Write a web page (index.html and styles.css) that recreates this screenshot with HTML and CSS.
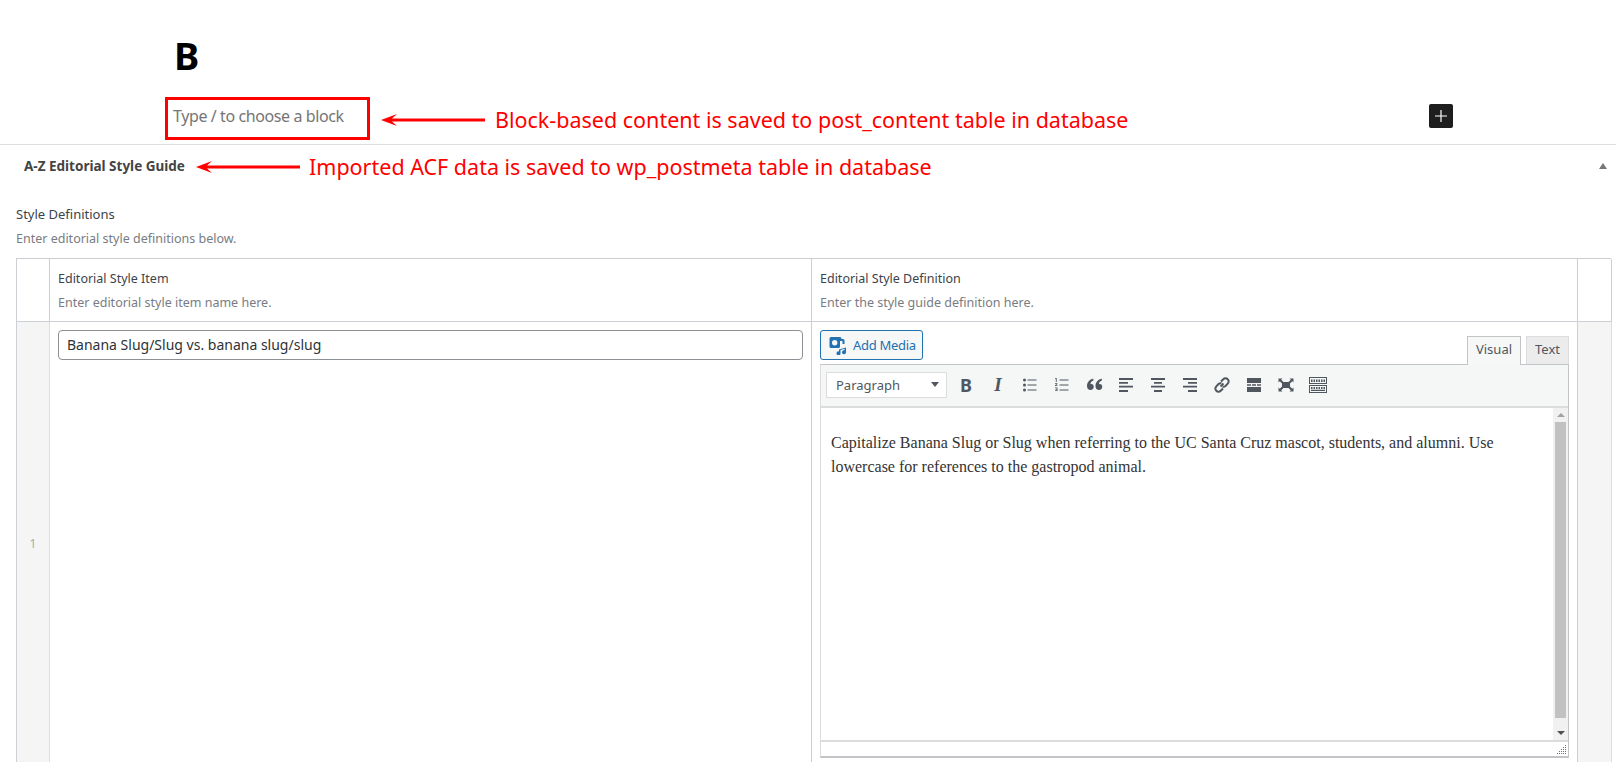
FILE: index.html
```html
<!DOCTYPE html>
<html lang="en">
<head>
<meta charset="utf-8">
<title>Editor</title>
<link rel="stylesheet" href="styles.css">
</head>
<body>
<div class="page">
  <section class="block-area">
    <h1 class="post-title">B</h1>
    <div class="block-row">
      <p class="placeholder">Type / to choose a block</p>
      <button class="inserter" aria-label="Add block">
        <svg width="24" height="24" viewBox="0 0 24 24"><path d="M11.400 6h1.200v5.400H18v1.200h-5.400V18h-1.200v-5.400H6v-1.200h5.400z" fill="#fff"/></svg>
      </button>
    </div>
  </section>

  <section class="metabox">
    <header class="metabox-head">
      <h2 class="metabox-title">A-Z Editorial Style Guide</h2>
      <span class="toggle"></span>
    </header>
    <div class="field">
      <div class="field-label top-label">Style Definitions</div>
      <p class="field-desc">Enter editorial style definitions below.</p>
      <div class="repeater">
        <div class="cell corner"></div>
        <div class="cell head">
          <div class="field-label">Editorial Style Item</div>
          <p class="field-desc">Enter editorial style item name here.</p>
        </div>
        <div class="cell head">
          <div class="field-label">Editorial Style Definition</div>
          <p class="field-desc">Enter the style guide definition here.</p>
        </div>
        <div class="cell corner"></div>

        <div class="cell order">1</div>
        <div class="cell body">
          <input class="text-input" type="text" value="Banana Slug/Slug vs. banana slug/slug">
        </div>
        <div class="cell body">
          <div class="editor-tools">
            <button class="add-media">
              <svg width="20" height="20" viewBox="0 0 20 20"><path fill="#2271b1" fill-rule="evenodd" d="M3 2h9.500l1.200 2H15a1.500 1.500 0 0 1 1.500 1.500V9h-2V6H12v5.500A1.500 1.500 0 0 1 10.500 13H3a1.500 1.500 0 0 1-1.500-1.500v-8A1.500 1.500 0 0 1 3 2zM6.700 5a2.700 2.700 0 1 0 0 5.400 2.700 2.700 0 0 0 0-5.400z"/><path fill="#2271b1" d="M11 14.500l7-2v4.700a2 2 0 1 1-1.500-1.900v-1.500l-4 1.100v3.400a2 2 0 1 1-1.500-1.900z"/></svg>
              <span>Add Media</span>
            </button>
            <div class="tabs">
              <span class="tab active">Visual</span>
              <span class="tab">Text</span>
            </div>
          </div>
          <div class="editor">
            <div class="toolbar">
              <div class="format-select"><span>Paragraph</span><i class="caret"></i></div>
              <span class="tool glyph-b">B</span>
              <span class="tool glyph-i">I</span>
              <span class="tool"><svg width="20" height="20" viewBox="0 0 20 20" fill="#50575e"><circle cx="4.500" cy="5" r="1.500"/><circle cx="4.500" cy="10" r="1.500"/><circle cx="4.500" cy="15" r="1.500"/><path d="M7.500 4.500h9v1h-9zM7.500 9.500h9v1h-9zM7.500 14.500h9v1h-9z"/></svg></span>
              <span class="tool"><svg width="20" height="20" viewBox="0 0 20 20" fill="#50575e"><path d="M3.500 3h1.200v4H3.800V4H3zM3 8.200h2.500V9l-1.500 1.200h1.500V11H3v-.8l1.500-1.200H3zM3 12.500h2.500v3.500H3v-.8h1.600v-.6H3.500v-.7h1.100v-.6H3zM7.500 4.500h9v1h-9zM7.500 9.500h9v1h-9zM7.500 14.500h9v1h-9z"/></svg></span>
              <span class="tool"><svg width="20" height="20" viewBox="2 2 16 16" fill="#50575e"><path d="M9.500 5v1.300C7.800 7 7.200 8 7.200 9.300c.2-.1.500-.1.700-.1 1.100 0 1.900.9 1.900 2.200 0 1.500-1 2.600-2.500 2.600-1.800 0-2.900-1.400-2.900-3.300C4.400 7.800 6.400 5.500 9.500 5zM16.300 5v1.300C14.600 7 14 8 14 9.300c.2-.1.500-.1.700-.1 1.100 0 1.900.9 1.900 2.200 0 1.500-1 2.600-2.500 2.600-1.800 0-2.900-1.400-2.900-3.300 0-2.900 2-5.200 5.100-5.700z"/></svg></span>
              <span class="tool"><svg width="20" height="20" viewBox="0 0 20 20" fill="#50575e"><path d="M3 3h14v2H3zM3 7h9v1.800H3zM3 10.800h14v1.800H3zM3 15h9v2H3z"/></svg></span>
              <span class="tool"><svg width="20" height="20" viewBox="0 0 20 20" fill="#50575e"><path d="M3 3h14v2H3zM6 7h8v1.800H6zM3 10.800h14v1.800H3zM6 15h8v2H6z"/></svg></span>
              <span class="tool"><svg width="20" height="20" viewBox="0 0 20 20" fill="#50575e"><path d="M3 3h14v2H3zM8 7h9v1.800H8zM3 10.800h14v1.800H3zM8 15h9v2H8z"/></svg></span>
              <span class="tool"><svg width="20" height="20" viewBox="0 0 20 20" fill="none" stroke="#50575e" stroke-width="2"><path d="M8.500 11.500l3-3"/><path d="M9 6.500l2.300-2.300a3 3 0 0 1 4.400 0 3 3 0 0 1 0 4.400L13.500 11a3 3 0 0 1-3 .7"/><path d="M11 13.500l-2.300 2.300a3 3 0 0 1-4.400 0 3 3 0 0 1 0-4.400L6.500 9a3 3 0 0 1 3-.7"/></svg></span>
              <span class="tool"><svg width="20" height="20" viewBox="0 0 20 20" fill="#50575e"><path d="M3 3h14v5H3zM3 9.300h4v1.400H3zM8 9.300h4v1.400H8zM13 9.300h4v1.400h-4zM3 12h14v5H3z"/></svg></span>
              <span class="tool"><svg width="20" height="20" viewBox="0 0 20 20" fill="#50575e"><path d="M2.500 3.500h4l-1.300 1.300L7.500 7h5l2.300-2.200-1.300-1.300h4v4l-1.300-1.300L14 8.500v3l2.200 2.300 1.300-1.300v4h-4l1.300-1.300L12.500 13h-5l-2.300 2.200 1.300 1.300h-4v-4l1.300 1.300L6 11.500v-3L3.800 6.200 2.500 7.500z"/></svg></span>
              <span class="tool"><svg width="20" height="20" viewBox="0 0 20 20" fill="#50575e" fill-rule="evenodd"><path d="M1 2h18v7H1zM2 3v5h16V3zM1 10h18v8H1zM2 11v6h16v-6z"/><path d="M3 4.500h1.500V7H3zM5.500 4.500H7V7H5.500zM8 4.500h1.500V7H8zM10.500 4.500H12V7h-1.500zM13 4.500h1.500V7H13zM15.500 4.500H17V7h-1.500zM3 12h1.500v2H3zM5.500 12H7v2H5.500zM8 12h1.500v2H8zM10.500 12H12v2h-1.500zM13 12h1.500v2H13zM15.500 12H17v2h-1.500zM3 14.800h14V16H3z"/></svg></span>
            </div>
            <div class="content">
              <div class="content-text">
                <p>Capitalize Banana Slug or Slug when referring to the UC Santa Cruz mascot, students, and alumni. Use lowercase for references to the gastropod animal.</p>
              </div>
              <div class="scrollbar">
                <i class="arrow up"></i>
                <div class="thumb"></div>
                <i class="arrow down"></i>
              </div>
            </div>
            <div class="statusbar">
              <svg width="12" height="12" viewBox="0 0 12 12" fill="#7a6a80"><path d="M9 1h1v1H9zM7 3h1v1H7zM9 3h1v1H9zM5 5h1v1H5zM7 5h1v1H7zM9 5h1v1H9zM3 7h1v1H3zM5 7h1v1H5zM7 7h1v1H7zM9 7h1v1H9zM1 9h1v1H1zM3 9h1v1H3zM5 9h1v1H5zM7 9h1v1H7zM9 9h1v1H9z"/></svg>
            </div>
          </div>
        </div>
        <div class="cell order"></div>
      </div>
    </div>
  </section>

  <div class="note-box"></div>
  <div class="note note-block">
    <svg class="red-arrow" width="104" height="14" viewBox="0 0 104 14"><path d="M0 7L16 1 11 5.500H104V8.500H11L16 13z" fill="#f00"/></svg>
    <span>Block-based content is saved to post_content table in database</span>
  </div>
  <div class="note note-acf">
    <svg class="red-arrow" width="104" height="14" viewBox="0 0 104 14"><path d="M0 7L16 1 11 5.500H104V8.500H11L16 13z" fill="#f00"/></svg>
    <span>Imported ACF data is saved to wp_postmeta table in database</span>
  </div>
</div>
</body>
</html>
```
FILE: styles.css
```css
* { box-sizing: border-box; }
html, body { margin: 0; height: 100%; overflow: hidden; background: #fff; }
body { font-family: "Noto Sans", "Open Sans", sans-serif; color: #1e1e1e; }
.page { position: relative; width: 1616px; height: 762px; overflow: hidden; }
p { margin: 0; }

.block-area { height: 144px; padding: 27px 0 0 174px; }
.post-title { margin: 0; height: 57px; font-size: 38px; line-height: 56px; font-weight: 700; color: #000; }
.block-row { display: flex; align-items: flex-start; padding-top: 20px; }
.placeholder { width: 1256px; font-size: 16px; line-height: 24px; letter-spacing: -0.4px; color: #757575; margin-left: -1px; }
.inserter { width: 24px; height: 24px; padding: 0; border: 0; border-radius: 2px; background: #1e1e1e; display: flex; }

.metabox { border-top: 1px solid #ddd; }
.metabox-head { height: 42px; padding: 0 0 0 24px; display: flex; align-items: center; justify-content: space-between; }
.metabox-title { margin: 0; font-size: 13.500px; line-height: 40px; font-weight: 700; color: #444; }
.toggle { width: 0; height: 0; margin-right: 9px; border-left: 4px solid transparent; border-right: 4px solid transparent; border-bottom: 6px solid #72777c; }

.field { padding: 18px 5px 0 16px; }
.field-label { font-size: 12.500px; line-height: 20px; color: #3c434a; }
.top-label { font-size: 13px; margin: -1px 0 5px; }
.field-desc { font-size: 12.500px; line-height: 20px; margin-top: 4px; color: #787c82; }

.repeater { display: grid; grid-template-columns: 33px 762px 766px 34px; grid-template-rows: 63px 460px; width: 1595px; margin-top: 9px; border-top: 1px solid #ccd0d4; border-left: 1px solid #ccd0d4; }
.cell { border-right: 1px solid #ccd0d4; border-bottom: 1px solid #ccd0d4; }
.head { padding: 10px 8px 0 8px; }
.order { background: #f5f5f5; color: #aaa; font-size: 12px; text-align: center; padding-top: 213px; border-right-color: #ddd; }
.body { padding: 8px; }

.text-input { width: 100%; height: 30px; padding: 0 8px 2px; border: 1px solid #8c8f94; border-radius: 4px; font: 14px "Noto Sans", sans-serif; color: #2c3338; background: #fff; }

.editor-tools { display: flex; justify-content: space-between; align-items: flex-end; height: 34px; }
.add-media { width: 103px; height: 30px; margin-bottom: 4px; padding: 0 0 0 7px; display: flex; align-items: center; gap: 5px; border: 1px solid #2271b1; border-radius: 3px; background: #f6f7f7; color: #2271b1; font: 13px "Noto Sans", sans-serif; letter-spacing: -0.3px; }
.tabs { display: flex; gap: 5px; }
.tab { height: 28px; padding: 0 8px; font-size: 13px; line-height: 25px; color: #50575e; background: #ececec; border: 1px solid #dcdcde; border-bottom: 0; }
.tab.active { height: 29px; margin-bottom: -1px; background: #f6f7f7; border-color: #c3c4c7; position: relative; }

.editor { height: 394px; border: 1px solid #c3c4c7; border-bottom-width: 2px; border-left-color: #dcdcde; display: flex; flex-direction: column; }
.toolbar { height: 43px; flex: none; background: #f5f6f6; border-bottom: 2px solid #dcdcde; display: flex; align-items: center; padding: 0 0 2px 5px; }
.format-select { width: 121px; height: 26px; flex: none; margin-right: 3px; padding: 0 7px 0 9px; display: flex; align-items: center; justify-content: space-between; background: #fff; border: 1px solid #dcdcde; font-size: 13px; color: #50575e; }
.caret { border-left: 4px solid transparent; border-right: 4px solid transparent; border-top: 5px solid #50575e; }
.tool { width: 32px; height: 28px; flex: none; display: flex; align-items: center; justify-content: center; color: #50575e; }
.glyph-b { font: 700 18px "Noto Sans", sans-serif; }
.glyph-i { font: italic 700 19px "Liberation Serif", serif; }

.content { flex: 1; min-height: 0; display: flex; border-bottom: 2px solid #dcdcde; }
.content-text { flex: 1; padding: 23px 10px 0 10px; font: 16px/24px "Liberation Serif", serif; color: #333; }
.scrollbar { width: 15px; flex: none; background: #f1f1f1; display: flex; flex-direction: column; align-items: center; justify-content: space-between; padding: 5px 0; }
.thumb { width: 11px; flex: 1; margin: 5px 0 13px; background: #c1c1c1; }
.arrow { width: 0; height: 0; border-left: 4px solid transparent; border-right: 4px solid transparent; }
.arrow.up { border-bottom: 4px solid #a3a3a3; }
.arrow.down { border-top: 4px solid #505050; }
.statusbar { height: 14px; flex: none; display: flex; justify-content: flex-end; align-items: flex-end; }

.note-box { position: absolute; left: 165px; top: 97px; width: 205px; height: 43px; border: 3px solid #f00; }
.note { position: absolute; display: flex; align-items: center; color: #f00; font-size: 21.500px; line-height: 30px; white-space: nowrap; }
.note-block { left: 381px; top: 105px; gap: 10px; }
.note-acf { left: 196px; top: 152px; gap: 9px; }
.red-arrow { flex: none; }
```
